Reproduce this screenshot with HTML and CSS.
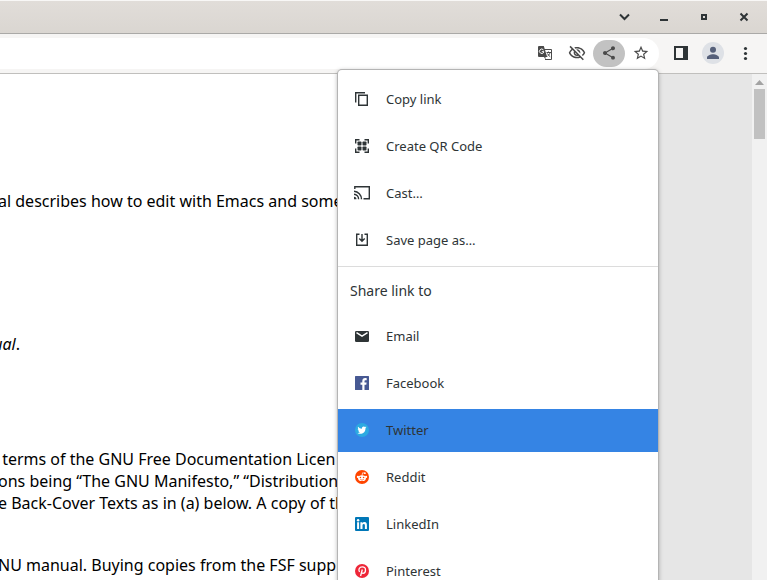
FILE: index.html
```html
<!DOCTYPE html>
<html lang="en">
<head>
<meta charset="utf-8">
<title>Browser share menu</title>
<link rel="stylesheet" href="styles.css">
</head>
<body>
<div class="window">
  <header class="titlebar">
    <button class="win-btn" aria-label="Search tabs"><svg width="16" height="16" viewBox="0 0 16 16"><path class="line" d="M4 5.500 8.500 10l4.500-4.500"/></svg></button>
    <button class="win-btn" aria-label="Minimize"><svg width="16" height="16" viewBox="0 0 16 16"><path d="M4 10h8v2H4z"/></svg></button>
    <button class="win-btn" aria-label="Maximize"><svg width="16" height="16" viewBox="0 0 16 16"><path fill-rule="evenodd" d="M5 5h6v6H5zM7 7v2h2V7z"/></svg></button>
    <button class="win-btn" aria-label="Close"><svg width="16" height="16" viewBox="0 0 16 16"><path class="line" d="M4.500 4.500l7 7M11.500 4.500l-7 7"/></svg></button>
  </header>

  <div class="toolbar">
    <div class="omnibox">
      <button class="tool-btn" aria-label="Translate"><svg width="16" height="16" viewBox="0 0 16 16"><path class="thin" d="M6 4.500h8.500v10H8"/><path d="M2 1h4.800l3.400 11H8.500v2.500L7 12H2a1 1 0 0 1-1-1V2a1 1 0 0 1 1-1z"/><path class="thin-light" d="M6.500 5a2.200 2.200 0 1 0 .3 2M4.800 6.700h2.300"/><path class="thin" d="M9.500 7.500H14M11.500 6.500v1M13 7.500c-.3 1.500-1.200 2.800-2.400 3.700M10.500 8.500c.6 1.300 1.400 2.200 2.700 3.200"/></svg></button>
      <button class="tool-btn" aria-label="Third-party cookies blocked"><svg width="18" height="18" viewBox="0 0 24 24"><path d="M12 6c3.790 0 7.170 2.130 8.820 5.500-.59 1.220-1.420 2.270-2.410 3.120l1.410 1.410c1.390-1.230 2.490-2.770 3.180-4.530C21.270 7.110 17 4 12 4c-1.270 0-2.490.2-3.640.57l1.650 1.650C10.660 6.090 11.320 6 12 6zm-1.070 1.140L13 9.210c.57.25 1.030.71 1.280 1.280l2.070 2.070c.08-.34.14-.7.14-1.070C16.500 9.010 14.480 7 12 7c-.37 0-.72.05-1.070.14zM2.010 3.870l2.680 2.680C3.060 7.830 1.770 9.530 1 11.500 2.730 15.890 7 19 12 19c1.520 0 2.980-.29 4.320-.82l3.420 3.420 1.410-1.410L3.420 2.450 2.010 3.870zm7.500 7.500l2.610 2.610c-.04.01-.08.02-.12.02-1.380 0-2.500-1.120-2.500-2.500 0-.05.01-.08.01-.13zm-3.400-3.400l1.750 1.750c-.23.55-.36 1.150-.36 1.780 0 2.480 2.020 4.500 4.500 4.500.63 0 1.230-.13 1.770-.36l.98.98c-.88.24-1.800.38-2.750.38-3.790 0-7.170-2.130-8.820-5.500.7-1.430 1.720-2.610 2.930-3.530z"/></svg></button>
      <button class="tool-btn active" aria-label="Share this page" aria-expanded="true"><svg width="16" height="16" viewBox="0 0 24 24"><path d="M18 16.080c-.76 0-1.440.3-1.960.77L8.910 12.700c.05-.23.09-.46.09-.7s-.04-.47-.09-.7l7.050-4.110c.54.5 1.250.81 2.040.81 1.660 0 3-1.340 3-3s-1.340-3-3-3-3 1.340-3 3c0 .24.04.47.09.7L8.040 9.810C7.500 9.310 6.790 9 6 9c-1.660 0-3 1.340-3 3s1.340 3 3 3c.79 0 1.500-.31 2.040-.81l7.120 4.160c-.05.21-.08.43-.08.65 0 1.610 1.310 2.920 2.920 2.920s2.920-1.310 2.920-2.920-1.310-2.920-2.920-2.920z"/></svg></button>
      <button class="tool-btn" aria-label="Bookmark this tab"><svg width="16" height="16" viewBox="1 1 22 22"><path d="M22 9.240l-7.190-.62L12 2 9.190 8.630 2 9.240l5.460 4.730L5.820 21 12 17.270 18.180 21l-1.630-7.030L22 9.240zM12 15.400l-3.760 2.270 1-4.280-3.320-2.880 4.380-.38L12 6.100l1.710 4.040 4.380.38-3.320 2.880 1 4.280L12 15.400z"/></svg></button>
    </div>
    <button class="tool-btn" aria-label="Side panel"><svg width="14" height="14" viewBox="0 0 14 14"><path class="dark" fill-rule="evenodd" d="M0 0h14v14H0zM2 2v10h7V2z"/></svg></button>
    <button class="tool-btn" aria-label="Profile"><svg width="22" height="22" viewBox="0 0 22 22"><circle class="avatar-bg" cx="11" cy="11" r="11"/><path class="avatar" d="M11 10.700a3 3 0 1 0 0-6 3 3 0 0 0 0 6zM5 17v-1.500c0-2 3.600-3.300 6-3.300s6 1.300 6 3.300V17z"/></svg></button>
    <button class="tool-btn" aria-label="Menu"><svg width="16" height="16" viewBox="0 0 16 16"><g class="dark"><circle cx="8.500" cy="3.500" r="1.600"/><circle cx="8.500" cy="8.500" r="1.600"/><circle cx="8.500" cy="13.500" r="1.600"/></g></svg></button>
  </div>

  <main class="viewport">
    <article class="manual">
      <p class="line-text intro">al describes how to edit with Emacs and some</p>
      <p class="line-text tail"><em>ual</em>.</p>
      <div class="license">
        <p class="line-text"> terms of the GNU Free Documentation Licen</p>
        <p class="line-text">ons being “The GNU Manifesto,” “Distribution</p>
        <p class="line-text">e Back-Cover Texts as in (a) below. A copy of th</p>
      </div>
      <p class="line-text">NU manual. Buying copies from the FSF supp</p>
    </article>
    <aside class="margin"></aside>
    <div class="scrollbar">
      <svg width="9" height="5" viewBox="0 0 9 5"><path d="M4.500 0 9 5H0z"/></svg>
      <div class="thumb"></div>
    </div>
  </main>

  <div class="share-menu">
    <div class="group">
      <button class="item"><svg width="16" height="16" viewBox="0 0 16 16"><path class="outline" d="M1.700 11.500V1.700H11M4.700 4.200h8.600v10.100H4.700z"/></svg>Copy link</button>
      <button class="item"><svg width="16" height="16" viewBox="0 0 16 16"><path class="outline" d="M1.700 5.500V1.700h3.800M10.500 1.700h3.800v3.800M14.300 10.500v3.800h-3.800M5.500 14.300H1.700v-3.800"/><rect x="3.500" y="3.500" width="4" height="4" rx=".8"/><rect x="8.500" y="3.500" width="4" height="4" rx=".8"/><rect x="3.500" y="8.500" width="4" height="4" rx=".8"/><rect x="8.500" y="8.500" width="4" height="4" rx=".8"/></svg>Create QR Code</button>
      <button class="item"><svg width="16" height="16" viewBox="0 0 16 16"><path class="outline" d="M.8 4V1.700h14.500v12H9.500M0 6.200a8 8 0 0 1 7.500 8M0 9.200a5 5 0 0 1 4.600 5"/><path d="M0 11.700a2.500 2.500 0 0 1 2.500 2.500H0z"/></svg>Cast…</button>
      <button class="item"><svg width="16" height="16" viewBox="0 0 16 16"><path class="outline" d="M5.500 2.200H2.700v11.100h10.600V2.200h-2.800M8 2v7M5.300 6.500 8 9.200l2.700-2.700"/></svg>Save page as…</button>
    </div>
    <h2 class="heading">Share link to</h2>
    <div class="group">
      <button class="item"><svg width="16" height="16" viewBox="0 0 16 16"><rect x="1" y="3" width="14" height="11" rx="1.300"/><path class="light-line" d="M2.500 4.700 8 8.200l5.500-3.500"/></svg>Email</button>
      <button class="item"><svg width="16" height="16" viewBox="0 0 16 16"><rect class="facebook" x="1" y="1" width="14" height="14" rx=".5"/><path class="light" d="M8.300 15V9.700H6.500V7.500h1.800V6c0-1.900 1.100-2.900 2.800-2.900.8 0 1.400.1 1.600.1v2h-1.100c-.9 0-1.100.4-1.100 1.100v1.200h2.100l-.3 2.200h-1.800V15z"/></svg>Facebook</button>
      <button class="item selected"><svg width="16" height="16" viewBox="0 0 16 16"><circle class="twitter" cx="8" cy="8" r="7"/><path class="light" d="M12.500 5.300c-.3.200-.7.300-1 .3.400-.2.600-.6.800-1-.4.200-.8.300-1.200.4a1.900 1.900 0 0 0-3.200 1.700c-1.500-.1-2.900-.8-3.800-2-.5.900-.2 2 .6 2.500-.3 0-.6-.1-.9-.2 0 .9.600 1.700 1.500 1.900-.3.100-.6.100-.8 0 .2.800.9 1.300 1.700 1.300-.8.600-1.800.9-2.700.8 3.300 2.100 8 .3 8-4.800.4-.2.800-.5 1-.9z"/></svg>Twitter</button>
      <button class="item"><svg width="16" height="16" viewBox="0 0 16 16"><circle class="reddit" cx="8" cy="8" r="7"/><g class="light"><ellipse cx="8" cy="9.200" rx="3.900" ry="2.900"/><circle cx="3.900" cy="7.900" r="1.100"/><circle cx="12.100" cy="7.900" r="1.100"/><circle cx="10.900" cy="4.200" r=".9"/></g><path class="antenna" d="M8 6.500 8.600 3.800l2.300.4"/><circle class="reddit" cx="6.400" cy="8.500" r=".8"/><circle class="reddit" cx="9.600" cy="8.500" r=".8"/><path class="smile" d="M6.300 10.400c1 .8 2.400.8 3.400 0"/></svg>Reddit</button>
      <button class="item"><svg width="16" height="16" viewBox="0 0 16 16"><rect class="linkedin" x="1" y="1" width="14" height="14" rx="1"/><path class="light" d="M3.100 6.300h2v6.600h-2zM6.400 6.300h2v.9c.4-.7 1.100-1.100 2-1.100 2.100 0 2.500 1.400 2.500 3.200v3.600h-2V9.700c0-.8 0-1.800-1.100-1.800s-1.300.8-1.300 1.700v3.300H6.400z"/><circle class="light" cx="4.100" cy="4.200" r="1.200"/></svg>LinkedIn</button>
      <button class="item"><svg width="16" height="16" viewBox="0 0 16 16"><circle class="pinterest" cx="8" cy="8" r="7"/><path class="pin" d="M5.500 9C4 6.600 5.400 3.900 8.200 3.900c2.100 0 3.300 1.300 3.300 3 0 2-1.100 3.400-2.500 3.400-.8 0-1.300-.4-1.400-.9M8.300 6.500 6.600 13"/></svg>Pinterest</button>
    </div>
  </div>
</div>
</body>
</html>
```
FILE: styles.css
```css
* { box-sizing: border-box; }

body {
  margin: 0;
  height: 100vh;
  overflow: hidden;
  font-family: "Noto Sans", sans-serif;
  color: #000;
  background: #fff;
}

button {
  display: flex;
  align-items: center;
  padding: 0;
  border: 0;
  background: none;
  font: inherit;
  color: inherit;
}

svg { flex: none; display: block; fill: currentColor; }

.window {
  position: relative;
  display: flex;
  flex-direction: column;
  height: 100%;
  overflow: hidden;
}

.titlebar {
  flex: none;
  display: flex;
  justify-content: flex-end;
  height: 34px;
  padding-right: 3px;
  border-top: 1px solid #f8f7f6;
  border-bottom: 1px solid #aaa9a7;
  background: linear-gradient(#e1ddd9, #dad6d1);
  color: #2e3436;
}

.win-btn { width: 40px; justify-content: center; }

.line { fill: none; stroke: currentColor; stroke-width: 2; }

.toolbar {
  flex: none;
  display: flex;
  align-items: center;
  height: 40px;
  padding-right: 6px;
  border-bottom: 1px solid #c0bfbd;
  background: #f6f5f4;
}

.omnibox {
  flex: 1;
  display: flex;
  justify-content: flex-end;
  align-items: center;
  height: 31px;
  margin-right: 6px;
  padding-right: 2px;
  border-radius: 0 16px 16px 0;
  background: #fff;
}

.tool-btn {
  justify-content: center;
  width: 32px;
  height: 27px;
  padding-bottom: 1px;
  color: #4a4a4a;
}

.active { border-radius: 14px; background: #c2c2c2; }
.dark { fill: #2e3436; }
.avatar-bg { fill: #dee1e6; }
.avatar { fill: #56607a; }
.thin { fill: none; stroke: currentColor; stroke-width: 1; }
.thin-light { fill: none; stroke: #fff; stroke-width: 1; }

.viewport { flex: 1; display: flex; min-height: 0; }

.manual {
  flex: 1;
  min-width: 0;
  margin-left: -2px;
  padding-top: 116px;
  font-size: 16px;
  line-height: 22px;
}

.line-text { margin: 0; white-space: pre; }

.intro { margin-bottom: 121px; }

.tail {
  display: flex;
  justify-content: flex-end;
  width: 22px;
  margin-bottom: 93px;
}

.license { margin-bottom: 40px; }

.margin { width: 414px; background: #e6e6e6; }

.scrollbar {
  display: flex;
  flex-direction: column;
  align-items: center;
  gap: 4px;
  width: 15px;
  padding-top: 6px;
  background: #f1f1f1;
  color: #a3a3a3;
}

.thumb { width: 11px; height: 50px; background: #c1c1c1; }

.share-menu {
  position: absolute;
  top: 70px;
  right: 109px;
  width: 320px;
  padding-top: 8px;
  border-radius: 4px 4px 0 0;
  background: #fff;
  box-shadow: 0 0 0 1px #b4b4b4, 0 1px 5px rgba(0, 0, 0, 0.4);
  color: #2e3436;
}

.group { display: flex; flex-direction: column; gap: 4px; }

.item {
  height: 43px;
  gap: 16px;
  padding: 0 16px 1px;
  font-size: 13px;
}

.selected { background: #3584e4; }

.heading {
  margin: 4px 0 0;
  padding: 0 12px;
  border-top: 1px solid #dcdcdc;
  font-size: 14px;
  font-weight: 400;
  line-height: 48px;
}

.outline { fill: none; stroke: currentColor; stroke-width: 1.4; }
.light { fill: #fff; }
.light-line { fill: none; stroke: #fff; stroke-width: 1.4; }
.facebook { fill: #475993; }
.twitter { fill: #2daae1; }
.reddit { fill: #ff4500; }
.linkedin { fill: #0077b7; }
.pinterest { fill: #ee2638; }
.antenna { fill: none; stroke: #fff; stroke-width: 0.7; }
.smile { fill: none; stroke: #ff4500; stroke-width: 0.7; }
.pin { fill: none; stroke: #fff; stroke-width: 1.3; }
```
